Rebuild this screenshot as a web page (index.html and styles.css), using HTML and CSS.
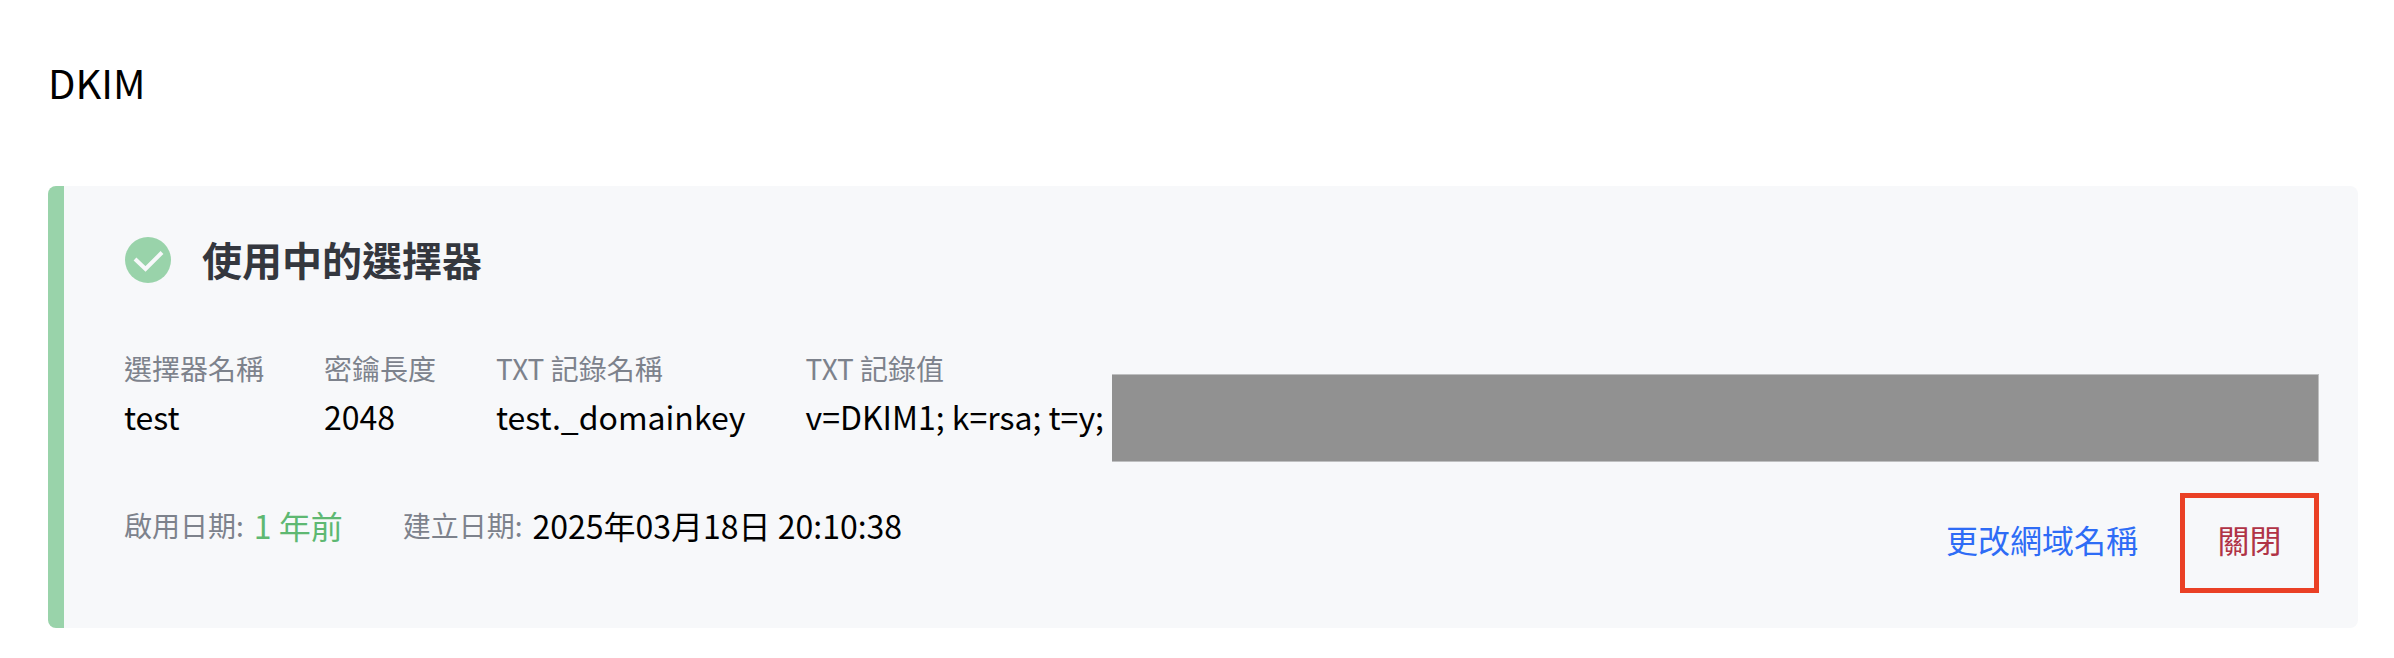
FILE: index.html
```html
<!DOCTYPE html>
<html lang="zh-Hant">
<head>
<meta charset="utf-8">
<title>DKIM</title>
<link rel="stylesheet" href="styles.css">
</head>
<body>
<main class="page">
  <h1 class="title">DKIM</h1>
  <section class="card">
    <header class="card-head">
      <svg class="check" viewBox="0 0 48 48" aria-hidden="true"><circle cx="24" cy="24" r="23"/><path d="M11 23l10.500 10L38 16.500"/></svg>
      <h2 class="card-title">使用中的選擇器</h2>
    </header>
    <div class="record">
      <dl class="fields">
        <div class="field"><dt>選擇器名稱</dt><dd>test</dd></div>
        <div class="field"><dt>密鑰長度</dt><dd>2048</dd></div>
        <div class="field"><dt>TXT 記錄名稱</dt><dd>test._domainkey</dd></div>
        <div class="field"><dt>TXT 記錄值</dt><dd>v=DKIM1; k=rsa; t=y;</dd></div>
      </dl>
      <div class="mask"></div>
    </div>
    <footer class="card-foot">
      <dl class="dates">
        <div class="date"><dt>啟用日期:</dt><dd class="ago">1 年前</dd></div>
        <div class="date"><dt>建立日期:</dt><dd>2025年03月18日 20:10:38</dd></div>
      </dl>
      <div class="actions">
        <button class="action" type="button">更改網域名稱</button>
        <button class="action action-close" type="button">關閉</button>
      </div>
    </footer>
  </section>
</main>
</body>
</html>
```
FILE: styles.css
```css
* { box-sizing: border-box; }
body {
  margin: 0;
  background: #fff;
  color: #000;
  font-family: "Noto Sans CJK TC", sans-serif;
}
h1, h2, dl, dd { margin: 0; }
.page { padding: 54px 36px 30px 48px; }
.title { font-size: 40px; line-height: 56px; font-weight: 400; }
.card {
  margin-top: 76px;
  padding: 48px 39px 35px 60px;
  border-left: 16px solid #99d3aa;
  border-radius: 8px;
  background: #f7f8fa;
}
.card-head { display: flex; align-items: center; gap: 30px; }
.check { width: 48px; height: 48px; fill: #99d3aa; }
.check path { fill: none; stroke: #f7f8fa; stroke-width: 4; }
.card-title {
  padding-bottom: 2px;
  font-size: 40px;
  line-height: 50px;
  font-weight: 700;
  color: #34373e;
}
.record { display: flex; gap: 8px; margin-top: 60px; }
.fields { display: flex; gap: 60px; }
.field dt { font-size: 28px; line-height: 44px; color: #7d828c; white-space: nowrap; }
.field dd { font-size: 32px; line-height: 52px; white-space: nowrap; }
.mask {
  flex: 1;
  height: 88px;
  margin-top: 28px;
  border: 1px solid #bebfc0;
  border-left: 0;
  background: #919191;
}
.card-foot { display: flex; justify-content: space-between; margin-top: 31px; }
.dates { display: flex; gap: 60px; padding-top: 10px; }
.date { display: flex; align-items: center; gap: 10px; height: 44px; }
.date dt { font-size: 28px; color: #7d828c; }
.date dd { font-size: 32px; }
.date .ago { color: #5eb872; }
.actions { display: flex; gap: 42px; }
.action {
  padding: 0 0 8px;
  border: 0;
  background: none;
  color: #2e6cf6;
  font: inherit;
  font-size: 32px;
  cursor: pointer;
}
.action-close { width: 139px; height: 100px; border: 5px solid #ea4025; color: #b03346; }
```
